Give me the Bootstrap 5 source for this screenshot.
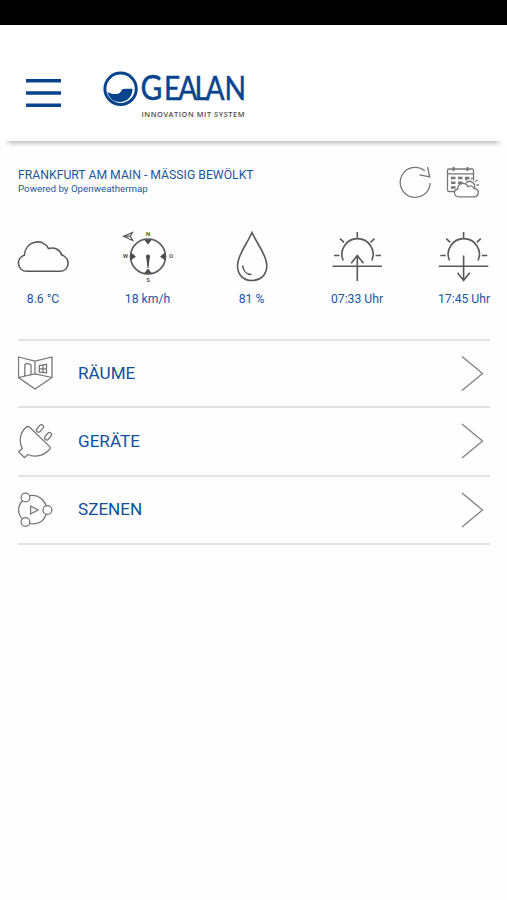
<!DOCTYPE html>
<html lang="de">
<head>
<meta charset="utf-8">
<meta name="viewport" content="width=device-width, initial-scale=1">
<title>Gealan</title>
<link href="https://cdn.jsdelivr.net/npm/bootstrap@5.3.0/dist/css/bootstrap.min.css" rel="stylesheet">
<style>
body{font-family:Roboto,"Liberation Sans",sans-serif;color:#1c579c;background:#fefefe;min-height:900px;overflow:hidden}
svg{display:block;flex:none;fill:none}
.statusbar{height:25px;background:#000}
.topbar{height:116px;background:#fff}
.topbar-shadow{height:6px;margin:0 4px;background:linear-gradient(#c6c6c6,#dedede 40%,#fefefe);-webkit-mask-image:linear-gradient(90deg,transparent,#000 8px,#000 calc(100% - 8px),transparent)}
.menu-btn{margin:50px 0 0 26px;width:35px;height:36px}
.brand-logo{margin:36px 0 0 42px;overflow:visible}
.content{padding:0 17px 0 18px}
.weather-head{height:84px;padding-top:19px}
.place{font-size:12.22px;line-height:14px;padding-top:2px}
.source{font-size:9.75px;line-height:12px;margin-top:1px}
.refresh-icon{margin-right:14px}
.forecast-icon{margin-right:10px}
.readings{display:grid;grid-template-columns:50px 159px 49px 162px 51px;height:108px}
.readings svg{height:54px}
.reading{font-size:12.2px;line-height:14px;margin-top:7px;white-space:nowrap}
.outline{stroke:#59595b;stroke-width:1.6}
.menu-list{border-top:2px solid #e2e2e2}
.menu-row{height:68.5px;border-bottom:2px solid #e2e2e2;color:#124f9d;font-size:17.1px;text-decoration:none}
.menu-row:first-child{height:67px}
.menu-row span{margin-left:25px;padding-top:1px}
.menu-row .outline{stroke:#747476;stroke-width:1.25}
.menu-row .chev{margin-right:6px;stroke:#858587;stroke-width:1.4}
</style>
<script src="https://cdn.jsdelivr.net/npm/bootstrap@5.3.0/dist/js/bootstrap.bundle.min.js"></script>
</head>
<body>
<div class="statusbar"></div>
<header>
  <div class="topbar d-flex align-items-start">
    <button class="menu-btn btn p-0 border-0" aria-label="Menü">
      <svg width="35" height="28" viewBox="0 0 35 28" stroke="#08448c" stroke-width="3.4"><path d="M0 1.8H35M0 14H35M0 26.3H35"/></svg>
    </button>
    <svg class="brand-logo" width="160" height="66" viewBox="103 61 160 66">
      <circle cx="120.600" cy="88.800" r="15.700" stroke="#08448c" stroke-width="3"/>
      <path d="M107.500 92C111 94.300 119.500 95.500 121 91.300C121.500 89.500 123 88.800 125 88.800H132.500C132.500 96.500 127.500 101.600 120.500 102C114 102.200 109 98.500 107.500 92Z" fill="#08448c"/>
      <text transform="translate(140.500 100.300) scale(.88 1)" x="0 26.800 43 61.500 74 95.500" y="0" font-family="Lato,sans-serif" font-size="32" fill="#08448c" stroke="#08448c" stroke-width=".5"><tspan font-size="34">G</tspan>EALAN</text>
      <text x="141.500" y="117" textLength="103" font-family="Open Sans,sans-serif" font-weight="600" font-size="7.400" fill="#4d4d50">INNOVATION MIT SYSTEM</text>
    </svg>
  </div>
  <div class="topbar-shadow"></div>
</header>
<main class="content">
  <section class="weather-head d-flex">
    <div class="flex-grow-1">
      <div class="place">FRANKFURT AM MAIN - MÄSSIG BEWÖLKT</div>
      <div class="source">Powered by Openweathermap</div>
    </div>
    <svg class="refresh-icon" width="33" height="34" viewBox="399 165.500 33 34" stroke="#77777a" stroke-width="1.300"><path d="M424.800 170.300A15 15 0 1 0 430.200 182.500M427.500 166.500L429.800 176.500L419.500 174.300"/></svg>
    <svg class="forecast-icon" width="34" height="34" viewBox="446 165.500 34 34" stroke="#77777a" stroke-width="1.300">
      <path d="M454 191H449Q447.500 191 447.500 189.500V170Q447.500 168.500 449 168.500H472Q473.500 168.500 473.500 170V180M447.500 173.300H473.500"/>
      <path d="M453.500 166.500V170.500M467.500 166.500V170.500" stroke-width="2"/>
      <path d="M451 177.500H455.500M458 177.500H462.500M465 177.500H469.500M451 182.300H455.500M458 182.300H462.500M451 187H455.500" stroke-width="2.400"/>
      <path d="M459 196.300H473.500C479.500 196.300 480 188.500 474 188C472.500 185.500 470 185 468 186.200C465.500 180.700 457.500 182.500 457.800 188.500C453 189.500 453.500 196.300 459 196.300Z" fill="#fff"/>
      <path d="M466 182.500C470 178.500 476 182.500 474.500 187.500M467 180L465.500 178M471.500 179L472.300 177M475 181L477.500 179.500M476.500 184.500H479"/>
    </svg>
  </section>
  <section class="readings text-center">
    <div>
      <svg class="outline" width="50" height="54" viewBox="18 231 50 54" overflow="visible"><path d="M27 271.300H59.500C70 271.300 71 258 61.500 254.800C60 249 54 247 48.500 248.600C43 237.500 25.500 240.500 24.300 255.200C15.500 258 17 271.300 27 271.300Z"/></svg>
      <div class="reading">8.6 °C</div>
    </div>
    <div>
      <svg class="mx-auto" width="54" height="54" viewBox="120.500 231 54 54">
        <circle cx="147.500" cy="256.500" r="17.500" class="outline"/>
        <g fill="#4d4d50"><path d="M143.500 239.500H151.500L147.500 244.500ZM143.500 273.500H151.500L147.500 268.500ZM130.300 252.500V260.500L135.500 256.500ZM164.700 252.500V260.500L159.500 256.500Z"/><circle cx="147.500" cy="256.500" r="2.100"/><path d="M145.700 257H149.300L148 268H147Z"/>
        <g font-size="6" font-weight="600" text-anchor="middle"><text x="147.500" y="236">N</text><text x="147.500" y="281.500">S</text><text x="125" y="258">W</text><text x="170.500" y="258">O</text></g></g>
        <path d="M123 236.200L132 232.500L129.800 236.300L132.200 240.500ZM123 236.200H130" stroke="#59595b" stroke-width="1.200"/>
      </svg>
      <div class="reading">18 km/h</div>
    </div>
    <div>
      <svg class="outline mx-auto" width="34" height="54" viewBox="234.500 231 34 54"><path d="M251.500 232.500C246 245 237 255 237 265.500C237 275 243 280.500 251.500 280.500C260 280.500 266.300 275 266.300 265.500C266.300 255 257 245 251.500 232.500ZM242.200 265.500C242.500 271 246 274.500 251 274.500"/></svg>
      <div class="reading">81 %</div>
    </div>
    <div>
      <svg class="outline mx-auto" width="52" height="54" viewBox="331 231 52 54"><path d="M343.200 260.500A15.600 15.600 0 1 1 371.800 260.500M357.300 232V238M340 238.700L344 242.300M374.500 238.700L370.500 242.300M334 255.500H339.500M375.500 255.500H381M332.500 266.300H382M357.300 281V255.500M351.200 263.300L357.300 255.500L363.400 263.300"/></svg>
      <div class="reading">07:33 Uhr</div>
    </div>
    <div>
      <svg class="outline" width="51" height="54" viewBox="331.700 231 51 54"><path d="M343.200 260.500A15.600 15.600 0 1 1 371.800 260.500M357.300 232V238M340 238.700L344 242.300M374.500 238.700L370.500 242.300M334 255.500H339.500M375.500 255.500H381M332.500 266.300H382M357.300 255.500V280.500M351.200 272.700L357.300 280.500L363.400 272.700"/></svg>
      <div class="reading">17:45 Uhr</div>
    </div>
  </section>
  <nav class="menu-list" aria-label="Hauptmenü">
    <a class="menu-row d-flex align-items-center" href="#">
      <svg class="outline" width="35" height="36" viewBox="18 356.500 35 36"><path d="M18.500 357.500L35 361.500L52 357.500V378L35 389.500L18.500 378ZM35 361.500V374.500M18.500 378L35 374.500L52 378M24.800 376.500V365.500Q24.800 364 26.300 364.200L30 364.700Q31 365 31 366V375.200M39.300 366.200L46.500 364.800V373.300L39.300 372.600ZM43 365.500V373M39.300 369.400H46.500"/></svg>
      <span>RÄUME</span>
      <svg class="chev ms-auto" width="23" height="36" viewBox="0 0.500 23 36"><path d="M1 1L21.500 18L1 35"/></svg>
    </a>
    <a class="menu-row d-flex align-items-center" href="#">
      <svg class="outline" width="35" height="36" viewBox="18 423 35 36"><path d="M29 426.800L49.500 446.300Q50.800 448 49.500 449.500C43.500 456 35 457.800 27.800 454.500L24.500 457.700L18.500 451.700L22.300 448.500C18.500 441.500 20 433 26 427.300Q27.500 426 29 426.800Z"/><rect x="37.900" y="424.200" width="4.200" height="8.500" rx="2.100" transform="rotate(40 40 428.400)"/><rect x="46" y="432" width="4.200" height="8.500" rx="2.100" transform="rotate(40 48.100 436.200)"/></svg>
      <span>GERÄTE</span>
      <svg class="chev ms-auto" width="23" height="36" viewBox="0 0 23 36"><path d="M1 1L21.500 18L1 35"/></svg>
    </a>
    <a class="menu-row d-flex align-items-center" href="#">
      <svg class="outline" width="35" height="36" viewBox="18.200 492 35 36"><circle cx="25.700" cy="497.500" r="4.400"/><circle cx="25.700" cy="522" r="4.400"/><circle cx="47.600" cy="510" r="4.400"/><path d="M30 495.600C38 494.500 44 499 46.300 505.600M46.300 514.300C44 521.500 38 525 30 523.500M22.700 500.800C17.500 506 17.500 514 22.700 519M30.800 506V514L38.300 510Z"/></svg>
      <span>SZENEN</span>
      <svg class="chev ms-auto" width="23" height="36" viewBox="0 0 23 36"><path d="M1 1L21.500 18L1 35"/></svg>
    </a>
  </nav>
</main>
</body>
</html>
